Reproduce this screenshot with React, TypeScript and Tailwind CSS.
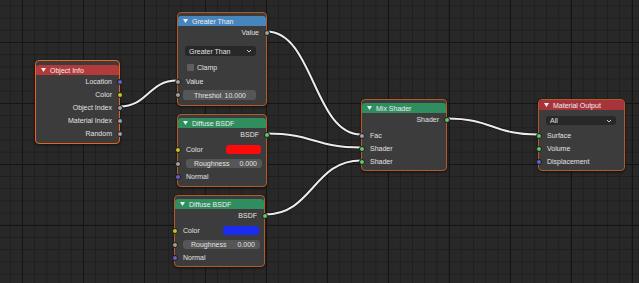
import React from 'react';

const SOCK: Record<string, string> = {
  float: 'bg-[#a1a1a1]',
  vector: 'bg-[#6363c7]',
  color: 'bg-[#c7c729]',
  shader: 'bg-[#63c763]',
};

function Socket({ kind, side }: { kind: string; side: 'in' | 'out' }) {
  return (
    <span
      className={`absolute top-1/2 -translate-y-1/2 w-[6px] h-[6px] rounded-full border border-[#1a1a1a] ${SOCK[kind]} ${
        side === 'in' ? '-left-[3.5px]' : '-right-[3.5px]'
      }`}
    />
  );
}

function Out({ label, kind }: { label: string; kind: string }) {
  return (
    <div className="relative h-[13px] flex items-center justify-end pr-[7px]">
      {label}
      <Socket kind={kind} side="out" />
    </div>
  );
}

function In({ label, kind, className = '' }: { label: string; kind: string; className?: string }) {
  return (
    <div className={`relative h-[13px] flex items-center pl-[8px] ${className}`}>
      {label}
      <Socket kind={kind} side="in" />
    </div>
  );
}

function Node({
  title,
  head,
  className,
  active,
  children,
}: {
  title: string;
  head: string;
  className: string;
  active?: boolean;
  children: React.ReactNode;
}) {
  return (
    <div
      className={`absolute rounded-[4px] border bg-[#3c3c3c] text-[7px] leading-none text-[#e2e2e2] shadow-[0_1px_3px_rgba(0,0,0,0.6)] ${
        active ? 'border-[#e8651f]' : 'border-[#b45a26]'
      } ${className}`}
    >
      <div className={`h-[10px] flex items-center gap-[4px] pl-[5px] rounded-t-[3px] ${head}`}>
        <svg width="5" height="4" viewBox="0 0 5 4">
          <path d="M0 0 H5 L2.5 4 Z" fill="#f0f0f0" />
        </svg>
        <span className="text-[#eeeeee]">{title}</span>
      </div>
      {children}
    </div>
  );
}

function Field({ label, value, className = '' }: { label: string; value: string; className?: string }) {
  return (
    <div className={`h-[9px] rounded-[3px] bg-[#565656] flex items-center justify-between pl-[8px] pr-[5px] ${className}`}>
      <span>{label}</span>
      <span>{value}</span>
    </div>
  );
}

function Chevron() {
  return (
    <svg width="6" height="4" viewBox="0 0 6 4">
      <path d="M1 1 L3 3 L5 1" fill="none" stroke="#cfcfcf" strokeWidth="1" />
    </svg>
  );
}

function wire(x1: number, y1: number, x2: number, y2: number) {
  const d = Math.max((x2 - x1) * 0.5, 20);
  return `M${x1},${y1} C${x1 + d},${y1} ${x2 - d},${y2} ${x2},${y2}`;
}

const links = [
  [119.5, 106.5, 177, 80.5],
  [266.5, 31.5, 361, 134.5],
  [267, 133.5, 361, 147.5],
  [265, 214.5, 361, 160.5],
  [447, 118.5, 538, 134.5],
];

export default function App() {
  return (
    <div className="relative w-[639px] h-[283px] overflow-hidden bg-[#282828] font-['Liberation_Sans',Arial,sans-serif] bg-[linear-gradient(to_right,#151515_1px,transparent_1px),linear-gradient(to_bottom,#151515_1px,transparent_1px),linear-gradient(to_right,#1f1f1f_1px,transparent_1px),linear-gradient(to_bottom,#1f1f1f_1px,transparent_1px)] bg-size-[61px_61px,61px_61px,12.2px_12.2px,12.2px_12.2px] bg-position-[22px_42px,22px_42px,22px_42px,22px_42px]">
      {/* wires */}
      <svg className="absolute inset-0" width={639} height={283}>
        {links.map(([a, b, c, d], i) => (
          <g key={i} fill="none">
            <path d={wire(a, b, c, d)} stroke="#111" strokeWidth={3.6} strokeOpacity={0.8} />
            <path d={wire(a, b, c, d)} stroke="#ececec" strokeWidth={2} />
          </g>
        ))}
      </svg>

      <Node title="Object Info" head="bg-[#b33a3a]" active className="left-[35px] top-[60px] w-[85px] pt-[4px] pb-[3px]">
        <Out label="Location" kind="vector" />
        <Out label="Color" kind="color" />
        <Out label="Object Index" kind="float" />
        <Out label="Material Index" kind="float" />
        <Out label="Random" kind="float" />
      </Node>

      <Node title="Greater Than" head="bg-[#4785bd]" className="left-[177px] top-[12px] w-[90px] pt-[3px] pb-[5px]">
        <Out label="Value" kind="float" />
        <div className="mt-[7px] ml-[7px] mr-[10px] h-[10px] rounded-[3px] bg-[#282828] flex items-center justify-between px-[4px]">
          <span>Greater Than</span>
          <Chevron />
        </div>
        <div className="mt-[5px] h-[13px] flex items-center gap-[3px] pl-[9px]">
          <span className="w-[7px] h-[7px] rounded-[1px] bg-[#5e5e5e]" />
          <span>Clamp</span>
        </div>
        <In label="Value" kind="float" className="mt-[1px]" />
        <div className="relative mt-[2px] ml-[5px] mr-[10px]">
          <Field label="Threshol" value="10.000" className="h-[10px] pl-[11px] pr-[10px]" />
          <span className="absolute top-1/2 -translate-y-1/2 -left-[8.5px] w-[6px] h-[6px] rounded-full border border-[#1a1a1a] bg-[#a1a1a1]" />
        </div>
      </Node>

      <Node title="Diffuse BSDF" head="bg-[#2f8d5e]" className="left-[177px] top-[114px] w-[90px] pt-[3px] pb-[3px]">
        <Out label="BSDF" kind="shader" />
        <div className="relative mt-[2px] h-[13px] flex items-center justify-between pl-[8px] pr-[5px]">
          <span>Color</span>
          <span className="w-[35px] h-[9px] rounded-[3px] bg-[#ff0a0a]" />
          <Socket kind="color" side="in" />
        </div>
        <div className="relative mt-[3px] ml-[8px] mr-[4px]">
          <Field label="Roughness" value="0.000" />
          <span className="absolute top-1/2 -translate-y-1/2 -left-[11.5px] w-[6px] h-[6px] rounded-full border border-[#1a1a1a] bg-[#a1a1a1]" />
        </div>
        <In label="Normal" kind="vector" className="mt-[2px]" />
      </Node>

      <Node title="Diffuse BSDF" head="bg-[#2f8d5e]" className="left-[174px] top-[195px] w-[91px] pt-[3px] pb-[2px]">
        <Out label="BSDF" kind="shader" />
        <div className="relative mt-[2px] h-[13px] flex items-center justify-between pl-[8px] pr-[5px]">
          <span>Color</span>
          <span className="w-[36px] h-[9px] rounded-[3px] bg-[#1b2cf2]" />
          <Socket kind="color" side="in" />
        </div>
        <div className="relative mt-[3px] ml-[8px] mr-[4px]">
          <Field label="Roughness" value="0.000" />
          <span className="absolute top-1/2 -translate-y-1/2 -left-[11.5px] w-[6px] h-[6px] rounded-full border border-[#1a1a1a] bg-[#a1a1a1]" />
        </div>
        <In label="Normal" kind="vector" className="mt-[2px]" />
      </Node>

      <Node title="Mix Shader" head="bg-[#2f8d5e]" className="left-[361px] top-[99px] w-[86px] pt-[3px] pb-[2px]">
        <Out label="Shader" kind="shader" />
        <In label="Fac" kind="float" className="mt-[3px]" />
        <In label="Shader" kind="shader" />
        <In label="Shader" kind="shader" />
      </Node>

      <Node title="Material Output" head="bg-[#a8343b]" className="left-[538px] top-[99px] w-[87px] pb-[2px]">
        <div className="mt-[6px] ml-[7px] mr-[8px] h-[9px] rounded-[3px] bg-[#282828] flex items-center justify-between px-[4px]">
          <span>All</span>
          <Chevron />
        </div>
        <In label="Surface" kind="shader" className="mt-[4px]" />
        <In label="Volume" kind="shader" />
        <In label="Displacement" kind="vector" />
      </Node>
    </div>
  );
}
